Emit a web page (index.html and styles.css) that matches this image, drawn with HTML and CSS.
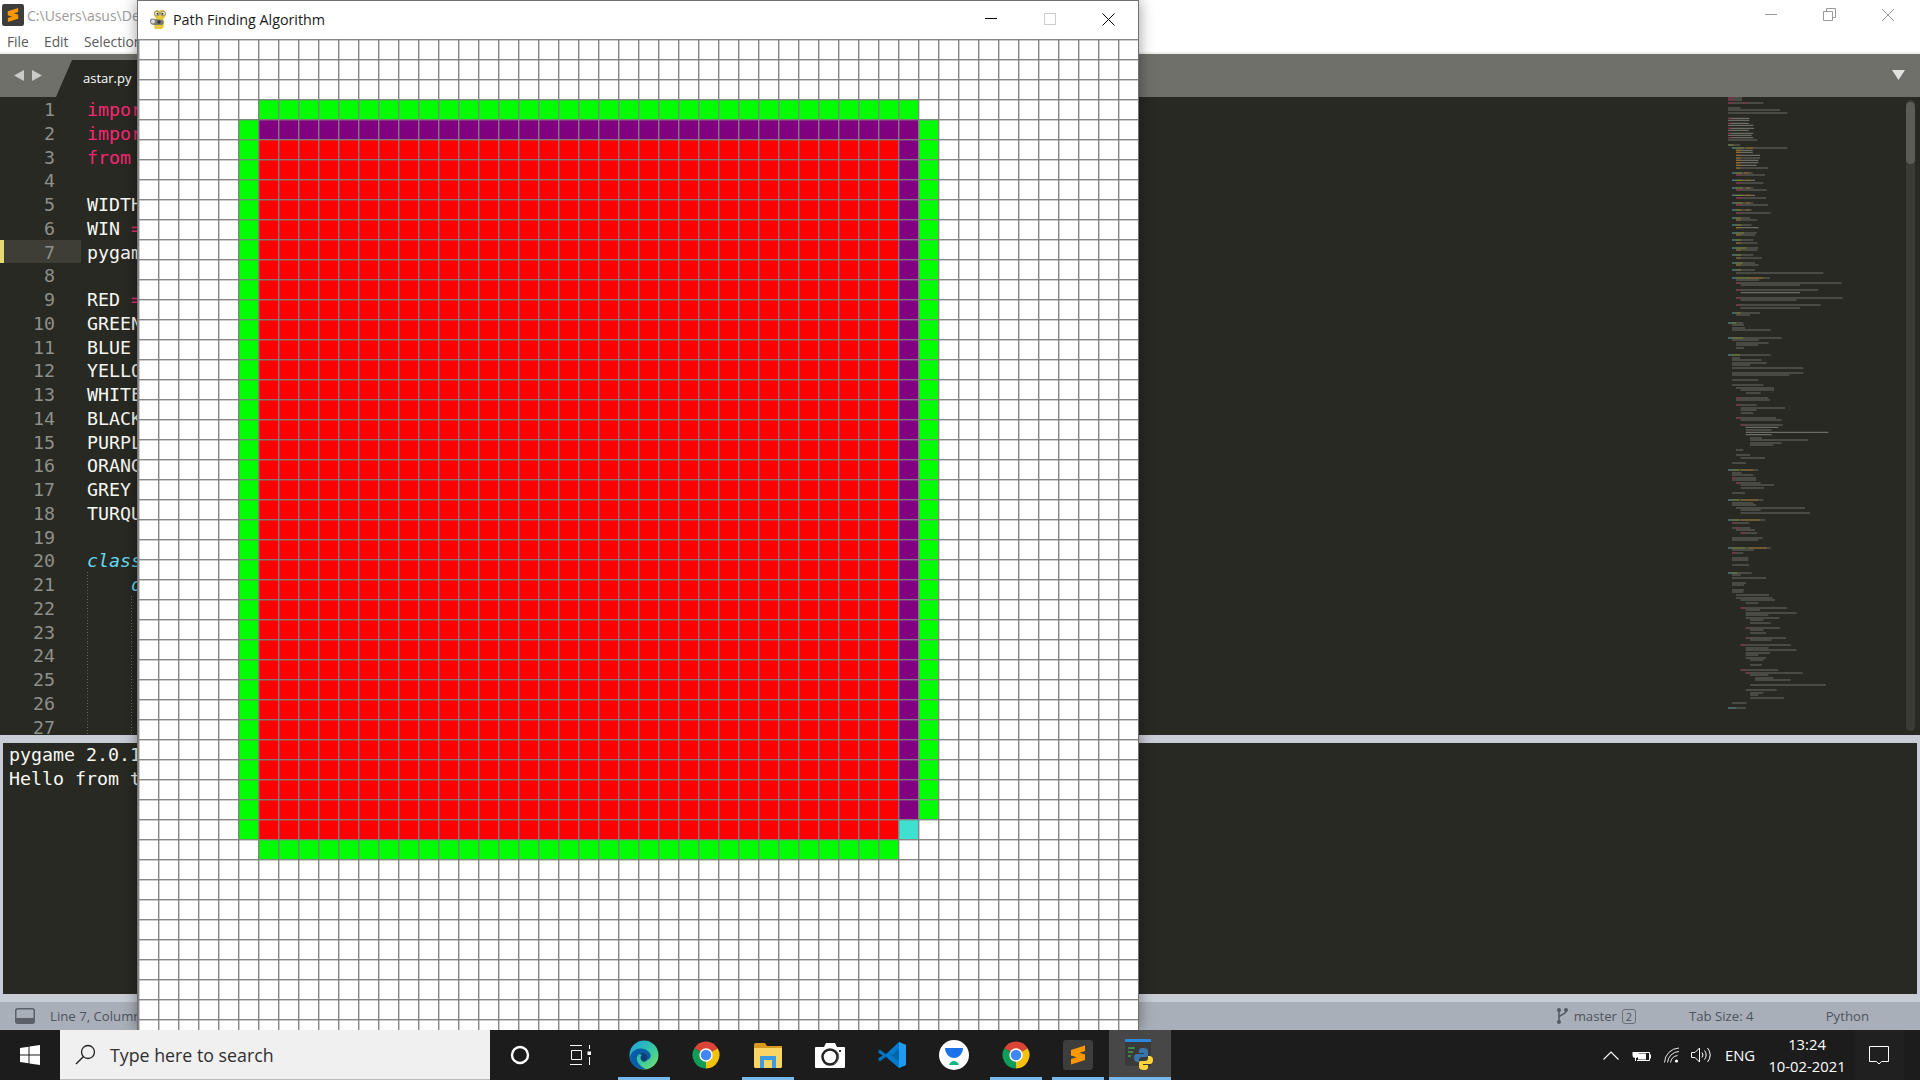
FILE: index.html
```html
<!DOCTYPE html>
<html lang="en">
<head>
<meta charset="utf-8">
<title>Path Finding Algorithm</title>
<link rel="stylesheet" href="styles.css">
</head>
<body>
<svg class="defs" width="0" height="0">
  <symbol id="chrome" viewBox="0 0 48 48">
    <path fill="#db4437" d="M24 24L4 12.5A23 23 0 0 1 44 12.5Z"/>
    <path fill="#f4c20d" d="M24 24L44 12.5A23 23 0 0 1 24 47Z"/>
    <path fill="#0f9d58" d="M24 24L24 47A23 23 0 0 1 4 12.5Z"/>
    <circle cx="24" cy="24" r="11.5" fill="#fff"/>
    <circle cx="24" cy="24" r="9" fill="#4285f4"/>
  </symbol>
  <symbol id="sublime" viewBox="0 0 30 30">
    <rect width="30" height="30" rx="3" fill="#3d3d3d"/>
    <path fill="#ff9800" d="M22 5.500V11L8 15.500V10ZM8 24.500V19L22 14.500V20Z"/>
    <path fill="#ff9800" d="M8 10L22 14.500V20L8 15.500Z"/>
  </symbol>
</svg>

<div class="editor-window">
  <header class="titlebar">
    <div class="title-row">
      <svg class="app-logo" width="22" height="22"><use href="#sublime"/></svg>
      <span class="path">C:\Users\asus\De</span>
      <div class="caption">
        <svg width="58" height="14" viewBox="0 0 58 14"><path d="M0 6.500H12" stroke="#9a9a9a" stroke-width="1" fill="none"/></svg>
        <svg width="59" height="14" viewBox="0 0 59 14"><path d="M0.500 3.500H9.500V12.500H0.500ZM3.500 3.500V0.500H12.500V9.500H9.500" stroke="#9a9a9a" fill="none"/></svg>
        <svg width="12" height="12" viewBox="0 0 12 12"><path d="M0 0L12 12M12 0L0 12" stroke="#9a9a9a" fill="none"/></svg>
      </div>
    </div>
    <nav class="menu"><span>File</span><span>Edit</span><span>Selection</span></nav>
  </header>
  <div class="tabbar">
    <svg class="arrows" width="28" height="11" viewBox="0 0 28 11"><path fill="#c9c9c5" d="M10 0V11L0 5.500ZM18 0V11L28 5.500Z"/></svg>
    <div class="tab">astar.py</div>
    <svg class="tab-menu" width="13" height="10" viewBox="0 0 13 10"><path fill="#e2e2de" d="M0 0H13L6.500 10Z"/></svg>
  </div>
  <main class="editor">
    <div class="code">
      <div class="line"><span class="num">1</span><span class="src kw">import</span></div>
      <div class="line"><span class="num">2</span><span class="src kw">import</span></div>
      <div class="line"><span class="num">3</span><span class="src kw">from</span></div>
      <div class="line"><span class="num">4</span><span class="src"></span></div>
      <div class="line"><span class="num">5</span><span class="src">WIDTH</span></div>
      <div class="line"><span class="num">6</span><span class="src">WIN <i class="op">=</i></span></div>
      <div class="line current"><span class="num">7</span><span class="src">pygam</span></div>
      <div class="line"><span class="num">8</span><span class="src"></span></div>
      <div class="line"><span class="num">9</span><span class="src">RED <i class="op">=</i></span></div>
      <div class="line"><span class="num">10</span><span class="src">GREEN</span></div>
      <div class="line"><span class="num">11</span><span class="src">BLUE</span></div>
      <div class="line"><span class="num">12</span><span class="src">YELLO</span></div>
      <div class="line"><span class="num">13</span><span class="src">WHITE</span></div>
      <div class="line"><span class="num">14</span><span class="src">BLACK</span></div>
      <div class="line"><span class="num">15</span><span class="src">PURPL</span></div>
      <div class="line"><span class="num">16</span><span class="src">ORANG</span></div>
      <div class="line"><span class="num">17</span><span class="src">GREY</span></div>
      <div class="line"><span class="num">18</span><span class="src">TURQU</span></div>
      <div class="line"><span class="num">19</span><span class="src"></span></div>
      <div class="line"><span class="num">20</span><span class="src storage">class</span></div>
      <div class="line"><span class="num">21</span><span class="src g1 storage">    def</span></div>
      <div class="line"><span class="num">22</span><span class="src g2"></span></div>
      <div class="line"><span class="num">23</span><span class="src g2"></span></div>
      <div class="line"><span class="num">24</span><span class="src g2"></span></div>
      <div class="line"><span class="num">25</span><span class="src g2"></span></div>
      <div class="line"><span class="num">26</span><span class="src g2"></span></div>
      <div class="line"><span class="num">27</span><span class="src g2"></span></div>
    </div>
    <svg class="minimap" width="220" height="638" viewBox="0 21 660 1914">
      <path class="mm-grey" d="M84 24H126M84 30H126M84 39H190M84 54H122M84 60H240M84 69H262M84 85H148M84 91H148M84 100H146M84 106H160M84 115H162M84 121H146M84 130H160M84 136H155M84 143H160M84 150H172M84 165H120M96 174H262M108 181H158M108 187H158M108 196H180M108 204H180M108 211H175M108 218H175M108 226H170M108 234H205M96 249H158M108 255H195M96 271H165M108 279H190M96 294H160M108 300H200M96 316H165M108 324H198M96 339H160M108 345H204M96 360H155M108 369H212M96 384H150M108 390H172M96 405H155M108 413H176M96 429H170M108 435H165M96 450H160M108 459H172M96 474H175M108 480H172M96 495H160M108 504H185M96 519H165M108 525H176M96 540H165M108 549H370M96 564H210M108 570H178M108 579H425M122 585H300M108 600H355M122 608H300M108 624H428M122 630H290M108 645H362M122 654H300M96 669H180M108 675H150M84 699H130M96 705H132M96 714H135M96 720H212M84 744H245M96 750H176M108 759H206M108 765H175M108 774H132M84 795H212M96 804H120M96 810H185M96 819H200M96 825H150M96 834H310M96 849H310M96 855H268M96 870H175M96 885H190M108 894H222M122 900H222M138 909H182M108 924H205M108 930H210M108 945H170M122 954H255M122 960H170M122 969H160M108 984H228M122 990H245M122 1005H248M137 1012H235M137 1020H215M137 1027H385M137 1034H215M150 1044H185M150 1050H325M150 1059H245M150 1065H220M108 1080H130M108 1095H150M122 1104H195M96 1119H138M84 1140H175M96 1149H125M96 1155H160M96 1164H168M96 1170H168M108 1179H182M122 1185H222M122 1194H192M96 1209H135M84 1230H190M96 1239H160M96 1245H168M108 1254H315M122 1260H182M122 1269H330M84 1290H195M96 1299H148M96 1314H150M108 1320H165M122 1329H172M96 1344H188M96 1350H175M84 1374H212M96 1380H162M96 1389H130M96 1404H145M96 1410H145M96 1425H148M84 1449H155M96 1455H122M96 1464H198M96 1479H138M96 1485H132M96 1500H132M96 1506H130M108 1515H207M108 1524H218M122 1530H225M137 1539H175M122 1554H262M137 1560H180M137 1569H290M137 1575H205M137 1584H238M150 1590H190M150 1599H212M137 1614H240M150 1620H190M150 1629H198M137 1644H258M150 1650H215M122 1665H272M137 1674H205M137 1680H290M137 1689H210M137 1695H175M137 1704H198M150 1710H190M150 1725H185M122 1740H235M137 1749H308M150 1755H205M165 1764H220M165 1770H272M150 1785H378M137 1800H230M150 1809H190M150 1815H175M150 1824H252M96 1839H140M84 1854H138"/>
      <path class="mm-pink" d="M84 24H102M84 30H102M84 39H100M128 39H144M84 85H92M84 100H92M84 115H92M84 130H92M84 143H92M108 255H126M108 279H126M108 300H126M108 324H126M108 345H126M108 369H126M108 579H120M108 600H120M108 624H120M108 645H120M108 924H120M108 945H120M108 984H120M122 1005H136M96 1164H108M108 1179H120M96 1299H108M108 1314H120M122 1329H136M96 1389H108M122 1554H136M137 1614H148M137 1644H148M122 1665H136M122 1740H136M137 1749H150"/>
      <path class="mm-cyan" d="M96 174H108M96 249H108M96 271H108M96 294H108M96 316H108M96 339H108M96 360H108M96 384H108M96 405H108M96 429H108M96 450H108M96 474H108M96 495H108M96 519H108M96 540H108M96 564H108M96 669H108M84 699H96M84 744H96M84 795H96M84 1140H96M84 1230H96M84 1290H96M84 1374H96M84 1449H96M84 1854H108"/>
      <path class="mm-green" d="M84 165H100M108 174H132M108 249H126M108 271H130M108 294H128M108 316H130M108 339H128M108 360H125M108 384H122M108 405H124M108 429H132M108 450H124M108 474H138M108 495H124M108 519H128M108 540H124M108 564H150M108 669H122M96 699H108M96 744H130M96 795H120M96 1140H118M96 1230H118M96 1290H118M96 1374H135M96 1449H112"/>
      <path class="mm-orange" d="M138 174H160M108 181H122M108 187H122M108 196H122M108 204H122M108 211H122M108 218H122M108 226H122M108 234H122M132 249H146M138 271H150M138 294H150M138 316H150M138 339H150M138 360H148M108 390H122M108 413H122M108 435H122M108 459H122M108 480H122M108 504H122M108 525H122M148 564H190M122 1140H160M122 1230H175M122 1290H180M145 1374H200"/>
    </svg>
    <div class="scrollbar"><div class="thumb"></div></div>
  </main>
  <div class="rule"></div>
  <section class="panel">
    <div>pygame 2.0.1</div>
    <div>Hello from t</div>
  </section>
  <div class="rule"></div>
  <footer class="status">
    <svg width="20" height="16" viewBox="0 0 20 16"><rect x="0.750" y="0.750" width="18.500" height="14.500" rx="2" fill="none" stroke="#5c6068" stroke-width="1.500"/><path d="M1 10H19V13A2 2 0 0 1 17 15H3A2 2 0 0 1 1 13Z" fill="#5c6068"/></svg>
    <span class="pos">Line 7, Column</span>
    <svg class="git" width="11" height="16" viewBox="0 0 11 16"><g fill="#555a62"><circle cx="2" cy="2" r="2"/><circle cx="9" cy="2" r="2"/><circle cx="2" cy="14" r="2"/></g><path d="M2 2V14M9 3C9 7 2 6 2 10" stroke="#555a62" stroke-width="1.500" fill="none"/></svg>
    <span class="branch">master</span>
    <span class="badge">2</span>
    <span class="tabsize">Tab Size: 4</span>
    <span class="lang">Python</span>
  </footer>
</div>

<div class="pg-window">
  <div class="pg-title">
    <svg class="pg-icon" width="20" height="21" viewBox="0 0 20 21">
      <path fill="#e8c93a" d="M5 4C5 1 9 0 10 2C12 0 17 1 17 5C17 8 15 9 14 10C16 13 15 19 13 20H6C4 18 6 12 7 9C5 8 5 6 5 4Z"/>
      <circle cx="8" cy="4.500" r="2.300" fill="#fff" stroke="#5a5330" stroke-width=".6"/>
      <circle cx="14" cy="4.500" r="2.300" fill="#fff" stroke="#5a5330" stroke-width=".6"/>
      <circle cx="8.500" cy="4.800" r="1" fill="#222"/><circle cx="13.500" cy="4.800" r="1" fill="#222"/>
      <path fill="#7d7d78" d="M1 12C1 9 4 9 6 10L14 11C15 13 15 15 13 16H5C3 16 1 15 1 12Z"/>
      <circle cx="4" cy="12.500" r="2" fill="#dcdcd8"/><circle cx="10" cy="13" r="1.800" fill="#3a3a38"/>
    </svg>
    <span class="pg-name">Path Finding Algorithm</span>
    <div class="pg-caption">
      <svg width="12" height="12" viewBox="0 0 12 12"><path d="M0 5.500H12" stroke="#000" fill="none"/></svg>
      <svg width="12" height="12" viewBox="0 0 12 12"><rect x=".5" y=".5" width="11" height="11" fill="none" stroke="#ccc"/></svg>
      <svg width="13" height="13" viewBox="0 0 13 13"><path d="M.5 .5L12.500 12.500M12.500 .5L.5 12.500" stroke="#000" fill="none"/></svg>
    </div>
  </div>
  <div class="canvas">
    <div class="block green top"></div>
    <div class="block green left"></div>
    <div class="block green right"></div>
    <div class="block green bottom"></div>
    <div class="block purple p-top"></div>
    <div class="block purple p-right"></div>
    <div class="block red fill"></div>
    <div class="block turquoise cursor"></div>
  </div>
</div>

<div class="taskbar">
  <div class="start">
    <svg width="20" height="20" viewBox="0 0 20 20"><path fill="#fff" d="M0 3L8.500 1.700V9.500H0ZM9.500 1.500L20 0V9.500H9.500ZM0 10.500H8.500V18.300L0 17ZM9.500 10.500H20V20L9.500 18.500Z"/></svg>
  </div>
  <div class="search">
    <svg width="21" height="21" viewBox="0 0 21 21"><circle cx="13" cy="8" r="6.500" fill="none" stroke="#222" stroke-width="1.300"/><path d="M8.500 12.500L1 20" stroke="#222" stroke-width="1.500"/></svg>
    <span>Type here to search</span>
  </div>
  <div class="sys"><svg width="20" height="20" viewBox="0 0 20 20"><circle cx="10" cy="10" r="8" fill="none" stroke="#fff" stroke-width="2.400"/></svg></div>
  <div class="sys taskview"><svg width="21" height="20" viewBox="0 0 21 20"><path d="M0 .5H12M0 19.500H12M1.500 5.500H11.500V14.500H1.500Z" fill="none" stroke="#fff"/><path d="M19.500 0V4M19.500 12V20" stroke="#fff"/><rect x="17.500" y="6.500" width="3.500" height="3.500" fill="#fff"/></svg></div>

  <div class="app running"><svg width="30" height="30" viewBox="0 0 30 30">
    <defs><linearGradient id="edge" x1="0" y1="0" x2="1" y2="1"><stop offset="0" stop-color="#1ea1e6"/><stop offset=".55" stop-color="#36c8a0"/><stop offset="1" stop-color="#7fe06a"/></linearGradient></defs>
    <circle cx="15" cy="15" r="14.500" fill="url(#edge)"/>
    <path fill="#0b5ca8" d="M1 17C3 8 14 6 20 12C23 15 22 19 18 20C22 14 13 10 9 15C6 19 9 26 17 29C8 30 1 25 1 17Z"/>
    <path fill="#0c3f7a" d="M9 15C13 10 22 14 18 20C17 22 14 22 13 21C11 19 11 16 13 15C11 14 10 14 9 15Z"/>
  </svg></div>
  <div class="app"><svg width="28" height="28"><use href="#chrome"/></svg></div>
  <div class="app running"><svg width="28" height="25" viewBox="0 0 28 25">
    <path fill="#d89a1e" d="M0 1.500A1.500 1.500 0 0 1 1.500 0H11L13 3H28V8H0Z"/>
    <path fill="#f9d565" d="M0 5H28V23.500A1.500 1.500 0 0 1 26.500 25H1.500A1.500 1.500 0 0 1 0 23.500Z"/>
    <path fill="#3f9be0" d="M6 13H22V25H18V17H10V25H6Z"/>
  </svg></div>
  <div class="app"><svg width="30" height="25" viewBox="0 0 30 25">
    <path fill="#fff" d="M1 4H9L11 0H20L22 4H29A1 1 0 0 1 30 5V24A1 1 0 0 1 29 25H1A1 1 0 0 1 0 24V5A1 1 0 0 1 1 4Z"/>
    <circle cx="15" cy="14" r="7.500" fill="none" stroke="#222" stroke-width="2.500"/>
    <path d="M19 21A8 8 0 0 0 20 7" fill="none" stroke="#666" stroke-width="1"/>
    <rect x="24" y="7" width="2" height="2" fill="#333"/>
  </svg></div>
  <div class="app"><svg width="30" height="30" viewBox="0 0 30 30">
    <path fill="#0065a9" d="M1 10.500L3 9.500L11 15.500L3 21.500L1 20.500L6 15.500ZM22 2L29 5V25L22 28L10 17L13 14.500Z"/>
    <path fill="#007acc" d="M22 2L8 15L3 11L1 12.500L6 15.500L1 18.500L3 20L8 16L22 28L22 21L14 15.500L22 9Z"/>
    <path fill="#1f9cf0" d="M22 2L29 5V25L22 28Z"/>
  </svg></div>
  <div class="app"><svg width="30" height="30" viewBox="0 0 30 30">
    <circle cx="15" cy="15" r="15" fill="#fff"/>
    <path fill="#1a73e8" d="M6 8H24C24 13 20 18 15 18C10 18 6 13 6 8Z"/>
    <path fill="#10b981" d="M10 25C11 22 13 21 15 21C17 21 19 22 20 25Z"/>
  </svg></div>
  <div class="app running"><svg width="28" height="28"><use href="#chrome"/></svg></div>
  <div class="app running"><svg width="30" height="30"><use href="#sublime"/></svg></div>
  <div class="app running focused"><svg width="30" height="32" viewBox="0 0 30 32">
    <rect x="0" y="1" width="26" height="26" fill="#3a3a3a"/>
    <rect x="0" y="0" width="26" height="3" fill="#2b88d8"/>
    <path d="M3 9H10M3 13H8M3 17H6" stroke="#3fa34d" stroke-width="1.500"/>
    <path fill="#3776ab" d="M18 9C14 9 14 11 14 12V14H19V15H12C10 15 9 17 9 19C9 22 11 23 12 23H14V21C14 19 15 18 17 18H21C23 18 23 17 23 16V12C23 10 21 9 18 9Z"/>
    <path fill="#ffd43b" d="M19 31C23 31 23 29 23 28V26H18V25H25C27 25 28 23 28 21C28 18 26 17 25 17H23V19C23 21 22 22 20 22H16C14 22 14 23 14 24V28C14 30 16 31 19 31Z"/>
  </svg></div>

  <div class="tray">
    <svg class="t-chev" width="16" height="9" viewBox="0 0 16 9"><path d="M.5 8.500L8 1L15.500 8.500" fill="none" stroke="#fff" stroke-width="1.100"/></svg>
    <svg class="t-bat" width="20" height="13" viewBox="0 0 20 13"><path d="M3 0V3M6 0V3M1.500 3H7.500V6A3 3 0 0 1 1.500 6Z" fill="#fff"/><path d="M4.500 8V12" stroke="#fff"/><path d="M6 3.500H18.500V11.500H6" fill="none" stroke="#fff"/><rect x="7" y="4.500" width="8" height="6" fill="#fff"/><rect x="19" y="5.500" width="1" height="4" fill="#fff"/></svg>
    <svg class="t-wifi" width="15" height="16" viewBox="0 0 15 16"><g fill="none" stroke="#fff" stroke-width=".9"><path d="M.5 15.500A15 15 0 0 1 15 1"/><path d="M3.500 15.500A12 12 0 0 1 15 4.500"/><path d="M6.500 15.500A8.500 8.500 0 0 1 13.500 8.500"/></g><circle cx="12.500" cy="14" r="1.600" fill="#fff"/></svg>
    <svg class="t-vol" width="20" height="16" viewBox="0 0 20 16"><g fill="none" stroke="#fff"><path d="M.5 5.500H4L8.500 1V15L4 10.500H.5Z"/><path d="M11 5.500A4 4 0 0 1 11 10.500"/><path d="M13.500 3.500A7 7 0 0 1 13.500 12.500"/><path d="M16.500 1A10.500 10.500 0 0 1 16.500 15"/></g></svg>
    <span class="t-lang">ENG</span>
    <div class="clock"><span>13:24</span><span>10-02-2021</span></div>
    <div class="notif"><svg width="20" height="19" viewBox="0 0 20 19"><path d="M.5 .5H19.500V15.500H12.500L10 18L7.500 15.500H.5Z" fill="none" stroke="#fff"/></svg></div>
  </div>
</div>
</body>
</html>
```

FILE: styles.css
```css
* { box-sizing: border-box; }
html, body { margin: 0; padding: 0; }
body {
  position: relative;
  width: 1920px;
  height: 1080px;
  overflow: hidden;
  display: flex;
  flex-direction: column;
  background: #282923;
  font-family: "Open Sans", "Noto Sans", sans-serif;
}
.defs { position: absolute; }

/* Sublime window */
.editor-window { height: 1030px; display: flex; flex-direction: column; background: #c8ccd4; }
.titlebar { height: 54px; background: #fff; border-bottom: 2px solid #efefef; }
.title-row { height: 29px; display: flex; align-items: center; padding-top: 1px; }
.app-logo { margin-left: 2px; flex: none; }
.path { margin-left: 3px; font-size: 14px; color: #9b9b9b; }
.caption { margin-left: auto; margin-right: 26px; display: flex; align-items: center; }
.menu { display: flex; padding: 1px 0 0 7px; font-size: 13.800px; color: #5b5b5b; height: 23px; align-items: center; }
.menu span:nth-child(1) { width: 37px; }
.menu span:nth-child(2) { width: 40px; }

.tabbar { height: 43px; flex: none; display: flex; align-items: flex-end; background: #6f706a; }
.arrows { margin: 0 0 16px 14px; flex: none; }
.tab {
  width: 240px;
  height: 43px;
  margin-left: 14px;
  padding: 6px 0 0 27px;
  background: #282923;
  clip-path: polygon(0 100%, 16px 6px, 100% 6px, 100% 100%);
  color: #fff;
  font-size: 13px;
  line-height: 37px;
}
.tab-menu { margin: 0 15px 17px auto; flex: none; }

.editor { height: 638px; flex: none; display: flex; background: #282923; overflow: hidden; }
.code { width: 1480px; flex: none; font-family: "DejaVu Sans Mono", monospace; font-size: 18.300px; color: #f8f8f2; }
.line { display: flex; height: 23.750px; line-height: 25.750px; }
.num {
  width: 81px;
  flex: none;
  padding-right: 26px;
  border-left: 4px solid transparent;
  text-align: right;
  color: #8f908a;
}
.current .num { border-left-color: #e6d873; background: #3e3e36; }
.src { margin-left: 6px; flex: 1; white-space: pre; }
.kw, .op { color: #f92672; font-style: normal; }
.storage { color: #66d9ef; font-style: italic; }
.g1 { background: repeating-linear-gradient(to bottom, #666 0 1px, transparent 1px 3px) 0 0 / 1px 100% no-repeat; }
.g2 {
  background:
    repeating-linear-gradient(to bottom, #666 0 1px, transparent 1px 3px) 0 0 / 1px 100% no-repeat,
    repeating-linear-gradient(to bottom, #666 0 1px, transparent 1px 3px) 44px 0 / 1px 100% no-repeat;
}
.minimap { flex: none; margin-left: 220px; margin-right: -14px; filter: blur(.45px); opacity: .8; }
.minimap path { fill: none; stroke-width: 3.600; }
.mm-grey { stroke: #7c7d75; }
.mm-pink { stroke: #a62a57; }
.mm-cyan { stroke: #4a96a6; }
.mm-green { stroke: #86a33c; }
.mm-orange { stroke: #b07c30; }
.scrollbar { width: 9px; flex: none; height: 631px; margin-top: 3px; background: #3a3b35; border-radius: 5px; }
.thumb { height: 62px; margin-top: 2px; background: #5b5c56; border-radius: 5px; }

.rule { height: 8px; flex: none; background: #c8ccd4; }
.panel {
  height: 251px;
  flex: none;
  margin: 0 3px;
  background: #282923;
  color: #f8f8f2;
  font-family: "DejaVu Sans Mono", monospace;
  font-size: 18.300px;
  line-height: 23.750px;
  padding-left: 6px;
}
.status {
  height: 28px;
  flex: none;
  display: flex;
  align-items: center;
  padding-left: 15px;
  background: #a9afb8;
  color: #4e5460;
  font-size: 13.200px;
}
.pos { margin-left: 15px; }
.git { margin-left: auto; }
.branch { margin-left: 6px; }
.badge {
  margin-left: 5px;
  width: 14px;
  height: 15px;
  border: 1px solid #6a6f78;
  border-radius: 3px;
  font-size: 11px;
  line-height: 13px;
  text-align: center;
}
.tabsize { margin-left: 53px; }
.lang { margin-left: 72px; margin-right: 51px; }

/* pygame window over the editor */
.pg-window {
  position: absolute;
  left: 137px;
  top: 0;
  width: 1002px;
  height: 1030px;
  overflow: hidden;
  background: #fff;
  border: 1px solid #707070;
  border-bottom: 0;
  box-shadow: 0 0 14px rgba(0, 0, 0, .4);
  z-index: 1;
}
.pg-title { height: 38px; display: flex; align-items: center; padding-bottom: 2px; background: #fff; }
.pg-icon { margin-left: 11px; flex: none; }
.pg-name { margin-left: 4px; font-size: 14.300px; color: #1a1a1a; }
.pg-caption { margin-left: auto; display: flex; align-items: center; margin-right: 23px; gap: 46px; }
.pg-caption svg:first-child { margin-right: 1px; }
.canvas {
  position: relative;
  display: grid;
  grid-template-columns: repeat(50, 20px);
  grid-template-rows: repeat(50, 20px);
  width: 1000px;
  height: 1000px;
  background: #fff;
}
.canvas::after {
  content: "";
  position: absolute;
  inset: 0;
  background-image:
    repeating-linear-gradient(to bottom, rgba(128,128,128,.95) 0 1px, rgba(128,128,128,.4) 1px 2px, transparent 2px 20px),
    repeating-linear-gradient(to right, rgba(128,128,128,.95) 0 1px, rgba(128,128,128,.4) 1px 2px, transparent 2px 20px);
}
.green { background: #0f0; }
.purple { background: #800080; }
.red { background: #f00; }
.turquoise { background: #40e0d0; }
.top { grid-row: 4; grid-column: 7 / 40; }
.left { grid-row: 5 / 41; grid-column: 6; }
.right { grid-row: 5 / 40; grid-column: 40; }
.bottom { grid-row: 41; grid-column: 7 / 39; }
.p-top { grid-row: 5; grid-column: 7 / 40; }
.p-right { grid-row: 6 / 40; grid-column: 39; }
.fill { grid-row: 6 / 41; grid-column: 7 / 39; }
.cursor { grid-row: 40; grid-column: 39; }

/* Windows taskbar */
.taskbar {
  position: relative;
  z-index: 2;
  height: 50px;
  flex: none;
  display: flex;
  background: #1c1c1c;
  color: #fff;
}
.start { width: 60px; flex: none; display: flex; align-items: center; justify-content: center; }
.search {
  width: 430px;
  flex: none;
  display: flex;
  align-items: center;
  padding-left: 15px;
  background: #f0f0f0;
  border-bottom: 1px solid #bbb;
  color: #2f2f2f;
  font-size: 17.800px;
}
.search span { margin-left: 14px; }
.sys { width: 60px; flex: none; display: flex; align-items: center; justify-content: center; }
.taskview { margin-right: 3px; }
.app {
  position: relative;
  width: 62px;
  flex: none;
  display: flex;
  align-items: center;
  justify-content: center;
}
.running::after {
  content: "";
  position: absolute;
  left: 5px;
  right: 5px;
  bottom: 0;
  height: 3px;
  background: #76b9ed;
}
.focused { background: #474747; }
.focused::after { left: 0; right: 0; }
.tray { margin-left: auto; display: flex; align-items: center; font-size: 14.800px; }
.t-bat { margin-left: 12px; }
.t-wifi { margin-left: 13px; }
.t-vol { margin-left: 12px; }
.t-lang { margin-left: 14px; width: 28px; white-space: nowrap; }
.clock { margin-left: 17px; width: 74px; display: flex; flex-direction: column; align-items: center; line-height: 22px; white-space: nowrap; }
.notif { margin-left: 10px; margin-right: 16px; width: 50px; height: 50px; display: flex; align-items: center; justify-content: center; background: #202020; }
```
